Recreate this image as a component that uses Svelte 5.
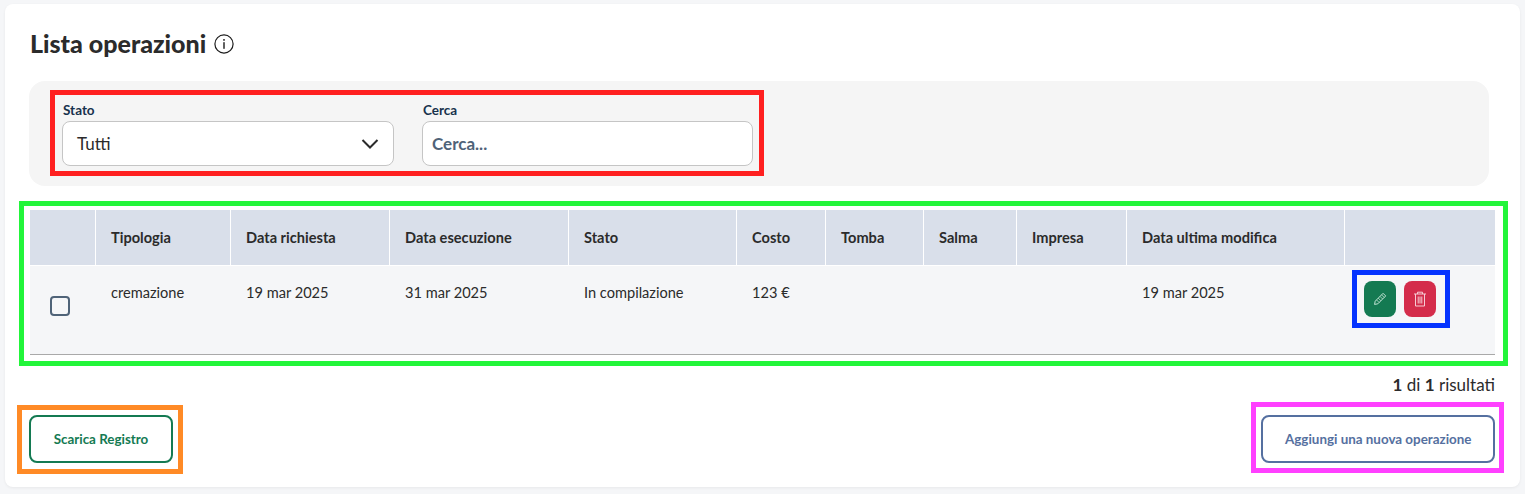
<script lang="ts">
  const columns = [
    { label: '', width: 65 },
    { label: 'Tipologia', width: 135 },
    { label: 'Data richiesta', width: 159 },
    { label: 'Data esecuzione', width: 179 },
    { label: 'Stato', width: 168 },
    { label: 'Costo', width: 89 },
    { label: 'Tomba', width: 98 },
    { label: 'Salma', width: 93 },
    { label: 'Impresa', width: 110 },
    { label: 'Data ultima modifica', width: 218 },
    { label: '', width: 151 }
  ];
</script>

<main class="page">
  <section class="card">
    <header class="title">
      <h1>Lista operazioni</h1>
      <svg class="info" viewBox="0 0 20 20" aria-hidden="true">
        <circle cx="10" cy="10" r="9.1" fill="none" stroke="#1c1c1c" stroke-width="1.2" />
        <rect x="9.3" y="8.2" width="1.4" height="6.6" fill="#1c1c1c" />
        <rect x="9.3" y="5" width="1.4" height="1.8" fill="#1c1c1c" />
      </svg>
    </header>

    <div class="filters">
      <div class="field">
        <label for="stato">Stato</label>
        <div class="control select" id="stato">
          <span>Tutti</span>
          <svg class="chevron" viewBox="0 0 18 12" aria-hidden="true">
            <path d="M1.5 2 L9 9.5 L16.5 2" fill="none" stroke="#2b2b2b" stroke-width="2" />
          </svg>
        </div>
      </div>
      <div class="field narrow">
        <label for="cerca">Cerca</label>
        <input id="cerca" class="control" placeholder="Cerca..." />
      </div>
    </div>

    <table>
      <colgroup>
        {#each columns as col}
          <col style="width: {col.width}px" />
        {/each}
      </colgroup>
      <thead>
        <tr>
          {#each columns as col}
            <th>{col.label}</th>
          {/each}
        </tr>
      </thead>
      <tbody>
        <tr>
          <td class="check-cell"><span class="checkbox"></span></td>
          <td>cremazione</td>
          <td>19 mar 2025</td>
          <td>31 mar 2025</td>
          <td>In compilazione</td>
          <td>123 €</td>
          <td></td>
          <td></td>
          <td></td>
          <td>19 mar 2025</td>
          <td class="actions-cell">
            <div class="actions">
              <button class="icon-btn edit" aria-label="Modifica">
                <svg class="pencil" viewBox="0 0 16 16" aria-hidden="true">
                  <path d="M11.5 1.5 L14.5 4.5 L5.5 13.5 L1.8 14.2 L2.5 10.5 Z" fill="none" stroke="#d7efe3" stroke-width="1" />
                  <path d="M9.8 3.2 L12.8 6.2 M4 9 L7 12 M6 7 L9 10 M8 5 L11 8" fill="none" stroke="#d7efe3" stroke-width="0.8" />
                </svg>
              </button>
              <button class="icon-btn delete" aria-label="Elimina">
                <svg viewBox="0 0 16 16" aria-hidden="true">
                  <path d="M2 3 H14 M5.5 3 V1.2 H10.5 V3 M3.5 3 V15 H12.5 V3 M6.2 5.5 V12.5 M8 5.5 V12.5 M9.8 5.5 V12.5" fill="none" stroke="#f6ccd4" stroke-width="1" />
                </svg>
              </button>
            </div>
          </td>
        </tr>
      </tbody>
    </table>

    <p class="count"><b>1</b> di <b>1</b> risultati</p>

    <footer class="buttons">
      <button class="outline green">Scarica Registro</button>
      <button class="outline blue">Aggiungi una nuova operazione</button>
    </footer>

    <!-- review markers drawn on top of the screenshot -->
    <span class="mark red"></span>
    <span class="mark lime"></span>
    <span class="mark navy"></span>
    <span class="mark orange"></span>
    <span class="mark pink"></span>
  </section>
</main>

<style>
  :global(body) {
    margin: 0;
    background: #f5f6f8;
    font-family: Lato, "Liberation Sans", sans-serif;
    color: #2b2b2b;
  }

  .page {
    padding: 4px 5px 7px;
    height: 494px;
    box-sizing: border-box;
  }

  .card {
    position: relative;
    height: 483px;
    box-sizing: border-box;
    padding: 24px 25px 0 24px;
    background: white;
    border-radius: 8px;
    box-shadow: 0 1px 3px rgba(0, 0, 0, 0.06);
  }

  .title {
    display: flex;
    align-items: center;
    gap: 8px;
    height: 32px;
    margin-left: 1px;
  }

  h1 {
    margin: 0 0 3px;
    font-size: 25px;
    font-weight: 900;
    color: #2b2b2b;
  }

  .info {
    width: 20px;
    height: 20px;
  }

  .filters {
    display: flex;
    gap: 28px;
    height: 105px;
    box-sizing: border-box;
    margin-top: 21px;
    padding: 19px 33px 0;
    background: #f5f5f5;
    border-radius: 16px;
    width: 1460px;
  }

  .field {
    display: flex;
    flex-direction: column;
    width: 332px;
  }

  .narrow {
    width: 331px;
  }

  label {
    height: 21px;
    margin-left: 1px;
    font-size: 13.5px;
    font-weight: 700;
    line-height: 20px;
    color: #17324d;
  }

  .control {
    display: flex;
    align-items: center;
    justify-content: space-between;
    width: 100%;
    height: 45px;
    box-sizing: border-box;
    border: 1px solid #c5c5c5;
    border-radius: 8px;
    background: white;
    font: inherit;
    outline: none;
  }

  .select {
    padding: 0 14px;
    font-size: 17px;
  }

  input.control {
    padding: 0 9px;
    font-size: 17px;
    font-weight: 700;
  }

  input::placeholder {
    color: #4f6378;
    opacity: 1;
  }

  .chevron {
    width: 18px;
    height: 12px;
  }

  table {
    width: 1465px;
    margin-top: 24px;
    margin-left: 1px;
    border-collapse: separate;
    border-spacing: 0;
    table-layout: fixed;
    font-size: 14.6px;
  }

  th {
    height: 55px;
    padding: 0 15px;
    box-sizing: border-box;
    background: #d9dfea;
    border-left: 1px solid white;
    text-align: left;
    font-weight: 700;
    color: #2b2b2b;
  }

  th:first-child {
    border-left: 0;
  }

  td {
    height: 90px;
    padding: 18px 15px 0 16px;
    box-sizing: border-box;
    vertical-align: top;
    background: #f5f6f8;
    border-top: 1px solid white;
    border-bottom: 1px solid #a9a9a9;
    white-space: nowrap;
  }

  .check-cell {
    padding: 30px 0 0 20px;
  }

  .checkbox {
    display: block;
    width: 20px;
    height: 20px;
    box-sizing: border-box;
    border: 2px solid #4f6378;
    border-radius: 4px;
  }

  .actions-cell {
    padding: 15px 0 0 20px;
  }

  .actions {
    display: flex;
    gap: 8px;
  }

  .icon-btn {
    display: flex;
    align-items: center;
    justify-content: center;
    width: 32px;
    height: 36px;
    padding: 0;
    border: 0;
    border-radius: 8px;
  }

  .icon-btn svg {
    width: 16px;
    height: 16px;
  }

  .icon-btn .pencil {
    width: 14px;
    height: 14px;
  }

  .edit {
    background: #147a52;
  }

  .delete {
    background: #d42c4b;
  }

  .count {
    margin: 20px 0 0;
    width: 1466px;
    text-align: right;
    font-size: 17px;
    line-height: 20px;
  }

  .buttons {
    display: flex;
    justify-content: space-between;
    width: 1466px;
    margin-top: 20px;
  }

  .outline {
    height: 48px;
    padding: 0 22px;
    background: white;
    border-radius: 8px;
    font: inherit;
    font-size: 13.4px;
    font-weight: 700;
    white-space: nowrap;
  }

  .green {
    width: 144px;
    color: #147a52;
    border: 2px solid #147a52;
  }

  .blue {
    width: 234px;
    color: #5570a0;
    border: 2px solid #5570a0;
  }

  .mark {
    position: absolute;
    box-sizing: border-box;
    border: 5px solid;
    pointer-events: none;
  }

  .red {
    left: 45px;
    top: 86px;
    width: 714px;
    height: 86px;
    border-color: #ff2020;
  }

  .lime {
    left: 14px;
    top: 197px;
    width: 1489px;
    height: 165px;
    border-color: #22f53a;
  }

  .navy {
    left: 1347px;
    top: 266px;
    width: 98px;
    height: 58px;
    border-color: #0433ff;
  }

  .orange {
    left: 12px;
    top: 401px;
    width: 166px;
    height: 69px;
    border-color: #ff8a26;
  }

  .pink {
    left: 1246px;
    top: 398px;
    width: 253px;
    height: 71px;
    border-color: #ff40ff;
  }
</style>
